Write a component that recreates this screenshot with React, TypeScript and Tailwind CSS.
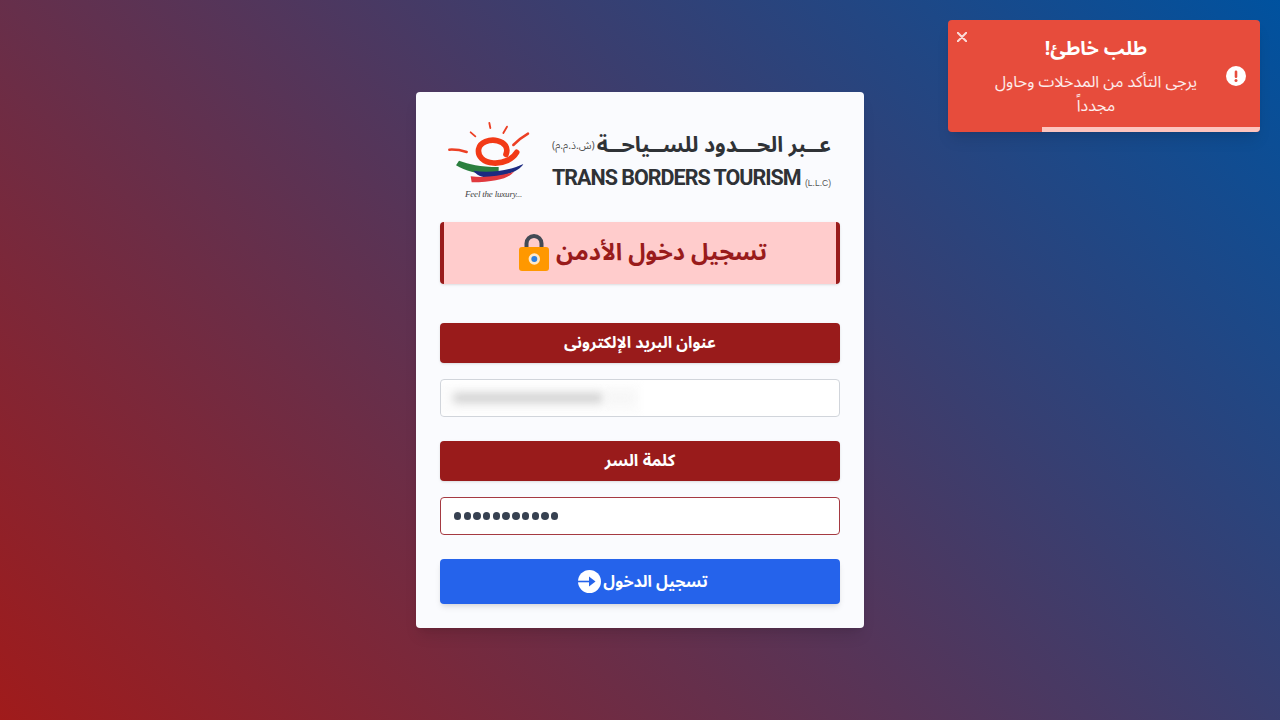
import React from "react";

const arabic = { fontFamily: '"Noto Sans Arabic", "Noto Kufi Arabic", "DejaVu Sans", "Noto Sans", sans-serif' };

function Logo() {
  return (
    <div className="flex items-start h-[104px]" dir="ltr">
      <div className="relative w-[112px] h-[90px] shrink-0 mt-[5px]">
        <svg width="100" height="90" viewBox="0 0 300 270" fill="none" className="block">
          <path d="M148 24l3 15" stroke="#ec3f24" strokeWidth="5.500" strokeLinecap="round" />
          <path d="M92 52l14 12" stroke="#ec3f24" strokeWidth="5.500" strokeLinecap="round" />
          <path d="M201 35l-11 19" stroke="#ec3f24" strokeWidth="5.500" strokeLinecap="round" />
          <path d="M264 56C250 64 234 76 220 90" stroke="#ec3f24" strokeWidth="7.500" strokeLinecap="round" />
          <path d="M28 104C45 103 64 106 80 111" stroke="#ec3f24" strokeWidth="7.500" strokeLinecap="round" />
          <path d="M48 151L57 137C88 148 118 156 176 156L176 176C124 180 82 172 48 151Z" fill="#2b7f3f" />
          <path d="M100 167C150 176 210 166 250 147C240 166 200 184 150 187C126 188 110 180 100 167Z" fill="#1c2a80" />
          <path d="M92 184C140 189 190 182 222 170C205 190 170 200 95 202Z" fill="#e0393e" />
          <path d="M230 112C218 132 192 146 160 144C130 142 112 124 116 102C120 82 148 72 172 77C194 82 206 98 198 118" stroke="#f23a17" strokeWidth="17" strokeLinecap="round" />
        </svg>
        <div className="absolute top-[75px] left-[25px] text-[9px] leading-none italic text-[#444] tracking-[-0.2px] whitespace-nowrap" style={{ fontFamily: '"Liberation Serif", serif' }}>
          Feel the luxury...
        </div>
      </div>
      <div className="flex flex-col w-[279px] text-[#2f3236] mt-[20px]">
        <div className="flex items-center justify-between h-[32px]">
          <span className="text-[10.500px] leading-none text-[#555]" style={arabic}>(ش.ذ.م.م)</span>
          <span className="text-[21.500px] leading-none font-bold whitespace-nowrap" style={arabic} dir="rtl">عــبر الحـــدود للســياحــة</span>
        </div>
        <div className="flex items-end justify-between mt-[4px]">
          <span className="text-[21.500px] leading-[24px] font-bold tracking-[-1px] whitespace-nowrap" style={{ fontFamily: 'Roboto, sans-serif' }}>TRANS BORDERS TOURISM</span>
          <span className="text-[8.500px] leading-none text-[#555] mb-[3px]" style={{ fontFamily: '"Liberation Sans", sans-serif' }}>(L.L.C)</span>
        </div>
      </div>
    </div>
  );
}

function Lock() {
  return (
    <svg width="30" height="38" viewBox="0 0 30 38" className="block shrink-0">
      <path d="M7.500 15V9.500a7.500 7.500 0 0 1 15 0V15" fill="none" stroke="#424a55" strokeWidth="4" />
      <rect x="0" y="13" width="30" height="24" rx="3" fill="#ff9800" />
      <circle cx="15.300" cy="25" r="5.700" fill="#ffe9c9" />
      <circle cx="15.300" cy="25" r="3" fill="#2f80e0" />
    </svg>
  );
}

function Label({ children, size }: { children: React.ReactNode; size: string }) {
  return (
    <div className={`h-10 flex items-center justify-center rounded bg-[#991b1b] text-white font-bold shadow-sm ${size}`}>
      {children}
    </div>
  );
}

export default function App() {
  return (
    <div dir="rtl" className="relative min-h-screen flex items-center justify-center overflow-hidden bg-[linear-gradient(45deg,#a01b1b,#00529f)]" style={arabic}>
      <div className="w-[448px] h-[536px] bg-[#fafbfe] rounded shadow-lg px-6 pt-[18px]">
        <Logo />
        <div className="mt-[8px] h-[62px] flex items-center justify-center gap-[7px] pl-[6px] rounded bg-[#ffcccc] border-x-4 border-[#991b1b] shadow text-[#991b1b] text-[23.500px] font-bold">
          <span>تسجيل دخول الأدمن</span>
          <Lock />
        </div>
        <div className="mt-[39px]">
          <Label size="text-[16px]">عنوان البريد الإلكترونى</Label>
        </div>
        <div className="relative mt-4 h-[38px] rounded border border-[#d1d5db] bg-white overflow-hidden" dir="ltr">
          <div className="absolute left-[-3px] top-[4px] h-[30px] w-[203px] bg-[#fcfcfc] blur-[3px]" />
          <div className="absolute left-[12px] top-[13px] h-[10px] w-[150px] bg-[#d2d2d2] blur-[4px] rounded" />
          <div className="absolute left-[165px] top-[12px] h-[12px] w-[28px] bg-[#f6f6f6] blur-[4px] rounded" />
        </div>
        <div className="mt-6">
          <Label size="text-[16.500px]">كلمة السر</Label>
        </div>
        <div className="mt-4 h-[38px] rounded border border-[#a53a42] bg-white flex items-center pl-[13px]" dir="ltr">
          <span className="flex gap-[2.300px]">
            {Array.from({ length: 11 }).map((_, i) => (
              <span key={i} className="w-[7.400px] h-[7.400px] rounded-full bg-[#374151]" />
            ))}
          </span>
        </div>
        <button className="mt-6 w-full h-[45px] flex items-center justify-center gap-[2px] pl-[6px] rounded bg-[#2563eb] text-white text-base font-bold shadow-md" style={arabic}>
          <span>تسجيل الدخول</span>
          <svg width="23" height="23" viewBox="0 0 23 23" className="block shrink-0">
            <circle cx="11.500" cy="11.500" r="11.500" fill="#fff" />
            <path d="M0 10.700h11.500v1.600H0z" fill="#2563eb" />
            <path d="M11 6.500l6.500 5-6.500 5z" fill="#2563eb" />
          </svg>
        </button>
      </div>

      <div className="absolute top-5 right-5 w-[312px] h-[112px] rounded bg-[#e74c3c] text-white shadow-lg overflow-hidden">
        <div className="flex h-full">
          <div className="w-[44px] shrink-0 flex items-center pr-[14px]">
            <svg width="20" height="20" viewBox="0 0 20 20" className="mt-[-1px] shrink-0">
              <circle cx="10" cy="10" r="10" fill="#fff" />
              <rect x="8.700" y="4.500" width="2.600" height="7.500" rx="1.300" fill="#e74c3c" />
              <circle cx="10" cy="14.500" r="1.500" fill="#e74c3c" />
            </svg>
          </div>
          <div className="w-[240px] text-center">
            <div className="mt-[17px] text-[19.500px] leading-[24px] font-bold">طلب خاطئ!</div>
            <div className="mt-[9px] text-[16px] leading-6 text-white/90 px-[8px]">يرجى التأكد من المدخلات وحاول مجدداً</div>
          </div>
        </div>
        <button className="absolute top-[12px] left-[9px] text-white/80">
          <svg width="10" height="10" viewBox="0 0 10 10" className="block">
            <path d="M.800.800l8.400 8.400M9.200.800L.800 9.200" stroke="currentColor" strokeWidth="2" strokeLinecap="round" />
          </svg>
        </button>
        <div className="absolute bottom-0 right-0 h-[5px] w-[218px] bg-[#fdc4be]" />
      </div>
    </div>
  );
}
